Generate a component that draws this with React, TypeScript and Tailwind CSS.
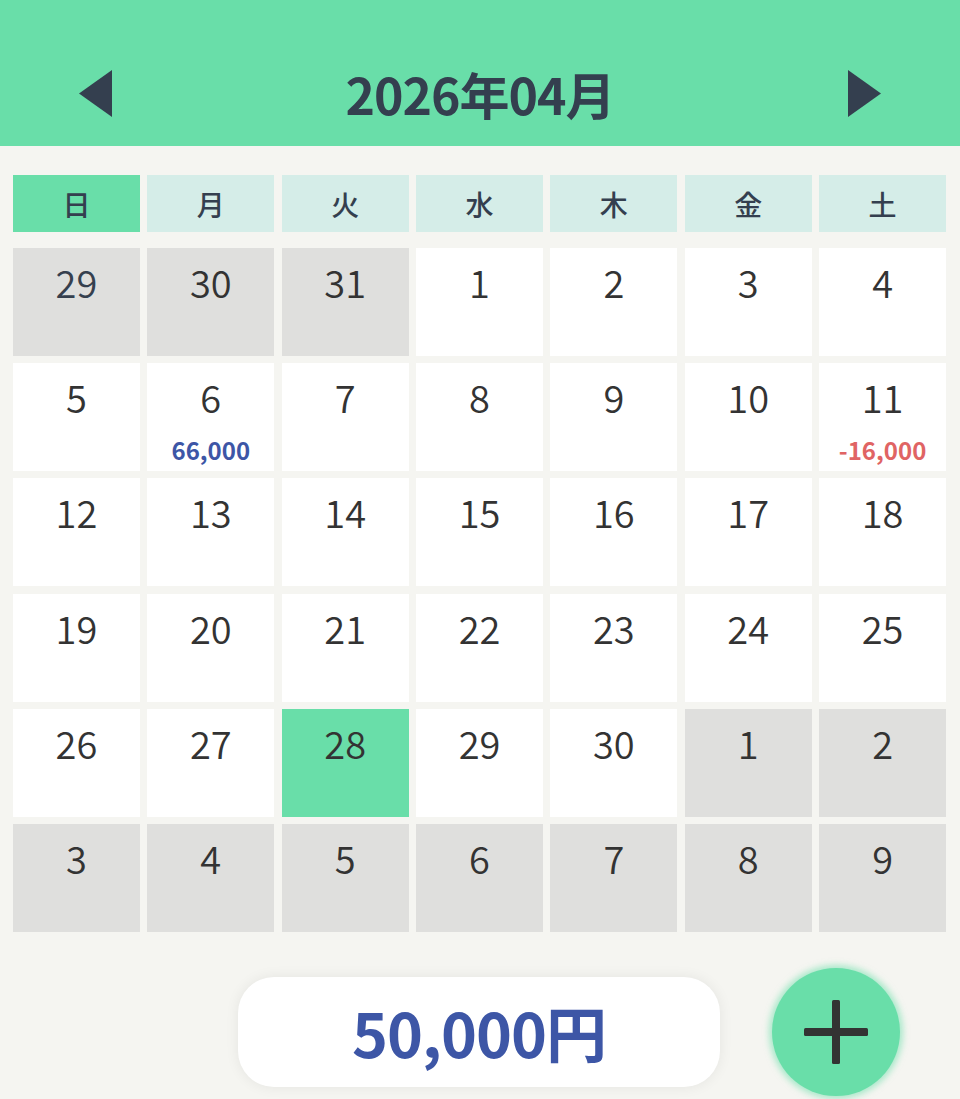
import React from "react";

type Day = { n: number; muted?: boolean; today?: boolean; amount?: string; kind?: "in" | "out" };

const WEEKDAYS = ["日", "月", "火", "水", "木", "金", "土"];

const DAYS: Day[] = [
  { n: 29, muted: true }, { n: 30, muted: true }, { n: 31, muted: true },
  { n: 1 }, { n: 2 }, { n: 3 }, { n: 4 },
  { n: 5 }, { n: 6, amount: "66,000", kind: "in" }, { n: 7 }, { n: 8 }, { n: 9 }, { n: 10 },
  { n: 11, amount: "-16,000", kind: "out" },
  { n: 12 }, { n: 13 }, { n: 14 }, { n: 15 }, { n: 16 }, { n: 17 }, { n: 18 },
  { n: 19 }, { n: 20 }, { n: 21 }, { n: 22 }, { n: 23 }, { n: 24 }, { n: 25 },
  { n: 26 }, { n: 27 }, { n: 28, today: true }, { n: 29 }, { n: 30 },
  { n: 1, muted: true }, { n: 2, muted: true },
  { n: 3, muted: true }, { n: 4, muted: true }, { n: 5, muted: true }, { n: 6, muted: true },
  { n: 7, muted: true }, { n: 8, muted: true }, { n: 9, muted: true },
];

function cellBg(d: Day) {
  if (d.today) return "bg-[#69dea9]";
  if (d.muted) return "bg-[#dfdfdd]";
  return "bg-white";
}

export default function App() {
  return (
    <div
      className="min-h-[1099px] bg-[#f5f5f1] text-[#333333]"
      style={{ fontFamily: '"Noto Sans CJK JP", "Noto Sans", sans-serif' }}
    >
      {/* header */}
      <div className="h-[146px] bg-[#69dea9] pt-[40px]">
        <div className="flex h-[106px] items-center justify-between px-[79px]">
          <svg width="33" height="47" viewBox="0 0 33 47">
            <polygon points="33,0 33,47 0,23.5" fill="#343f4f" />
          </svg>
          <h1 className="text-[50px] font-bold leading-none tracking-[-1px] text-[#343f4f]">2026年04月</h1>
          <svg width="33" height="47" viewBox="0 0 33 47">
            <polygon points="0,0 0,47 33,23.5" fill="#343f4f" />
          </svg>
        </div>
      </div>

      {/* weekdays */}
      <div className="mt-[29px] grid grid-cols-7 gap-x-[7.5px] pl-[13px] pr-[14px]">
        {WEEKDAYS.map((w, i) => (
          <div
            key={w}
            className={`flex h-[57px] items-center justify-center text-[28px] font-medium text-[#343f4f] ${i === 0 ? "bg-[#69dea9]" : "bg-[#d5ede8]"}`}
          >
            {w}
          </div>
        ))}
      </div>

      {/* days */}
      <div className="mt-[16px] grid grid-cols-7 gap-x-[7.5px] gap-y-[7.2px] pl-[13px] pr-[14px]">
        {DAYS.map((d, i) => (
          <div key={i} className={`flex h-[108px] flex-col items-center pt-[11px] ${cellBg(d)}`}>
            <span className={`text-[38px] font-[350] leading-[46px] ${i === 0 ? "text-[#36404e]" : "text-[#333333]"}`}>{d.n}</span>
            {d.amount && (
              <span
                className={`mt-[16px] text-[24px] font-bold leading-[28px] ${d.kind === "in" ? "text-[#3d56a6]" : "text-[#e06464]"}`}
              >
                {d.amount}
              </span>
            )}
          </div>
        ))}
      </div>

      {/* total + add */}
      <div className="mt-[35px] flex h-[130px] items-center pl-[238px]">
        <div className="flex h-[110px] w-[482px] items-center justify-center rounded-[36px] bg-white shadow-[0_0_14px_rgba(0,0,0,0.07)]">
          <span className="text-[61px] font-bold leading-none tracking-[-1px] text-[#3d56a6]">50,000円</span>
        </div>
        <button className="ml-[52px] flex h-[128px] w-[128px] items-center justify-center rounded-full bg-[#69dea9] shadow-[0_0_6px_3px_rgba(105,222,169,0.55)]">
          <svg width="64" height="64" viewBox="0 0 64 64">
            <rect x="28" y="0" width="8" height="64" rx="1.5" fill="#333333" />
            <rect x="0" y="28" width="64" height="8" rx="1.5" fill="#333333" />
          </svg>
        </button>
      </div>
    </div>
  );
}
